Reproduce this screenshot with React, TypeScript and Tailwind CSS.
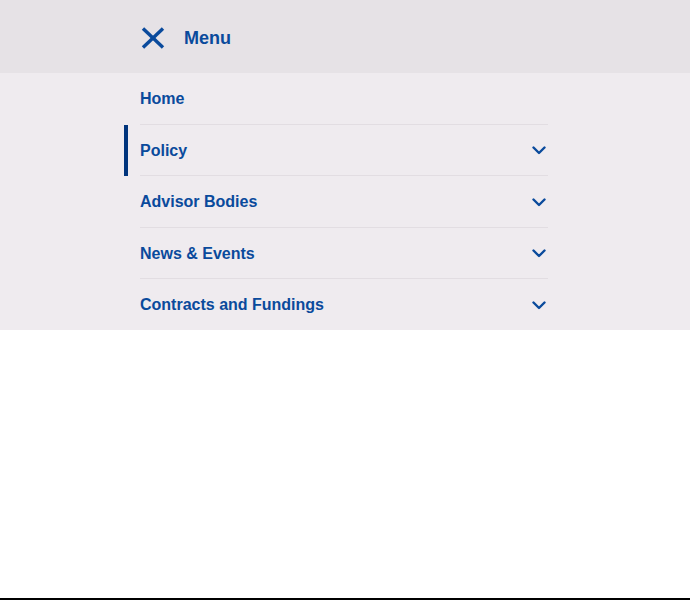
import React from 'react';

const items = [
  { label: 'Home', sub: false, active: false },
  { label: 'Policy', sub: true, active: true },
  { label: 'Advisor Bodies', sub: true, active: false },
  { label: 'News & Events', sub: true, active: false },
  { label: 'Contracts and Fundings', sub: true, active: false },
];

const Chevron = () => (
  <svg width="14" height="9" viewBox="0 0 14 9" fill="none" className="text-[#0a4a9c]">
    <polyline points="1.5,1.5 7,7 12.5,1.5" stroke="currentColor" strokeWidth="2.4" strokeLinecap="round" strokeLinejoin="round" />
  </svg>
);

export default function App() {
  return (
    <div className="h-[600px] flex flex-col bg-white border-b-2 border-black" style={{ fontFamily: '"Liberation Sans", Arial, sans-serif' }}>
      {/* header */}
      <div className="h-[73px] bg-[#e6e2e6] shrink-0">
        <div className="w-[440px] ml-[124px] h-full flex items-center pl-[17px] pt-[2px]">
          <svg width="24" height="22" viewBox="0 0 24 22" fill="none" className="text-[#0a4a9c]">
            <line x1="2" y1="1.5" x2="22" y2="20.5" stroke="currentColor" strokeWidth="3.4" />
            <line x1="22" y1="1.5" x2="2" y2="20.5" stroke="currentColor" strokeWidth="3.4" />
          </svg>
          <span className="ml-[19px] text-[18px] font-bold text-[#0a4a9c] leading-none">Menu</span>
        </div>
      </div>

      {/* nav list */}
      <nav className="bg-[#efebef] shrink-0">
        <ul className="w-[440px] ml-[124px]">
          {items.map((item, i) => (
            <li key={item.label} className="relative">
              {item.active && <span className="absolute left-0 top-0 bottom-0 w-[4px] bg-[#00347c]" />}
              <div className="mx-4">
                <div className="h-[50.5px] flex items-center justify-between pt-[2px] pr-[2px]">
                  <span className="text-[16px] font-bold text-[#0a4a9c]">{item.label}</span>
                  {item.sub && <Chevron />}
                </div>
                {i < items.length - 1 && <div className="h-px bg-[#e2dde2]" />}
              </div>
            </li>
          ))}
        </ul>
      </nav>

      <div className="flex-1" />
    </div>
  );
}
